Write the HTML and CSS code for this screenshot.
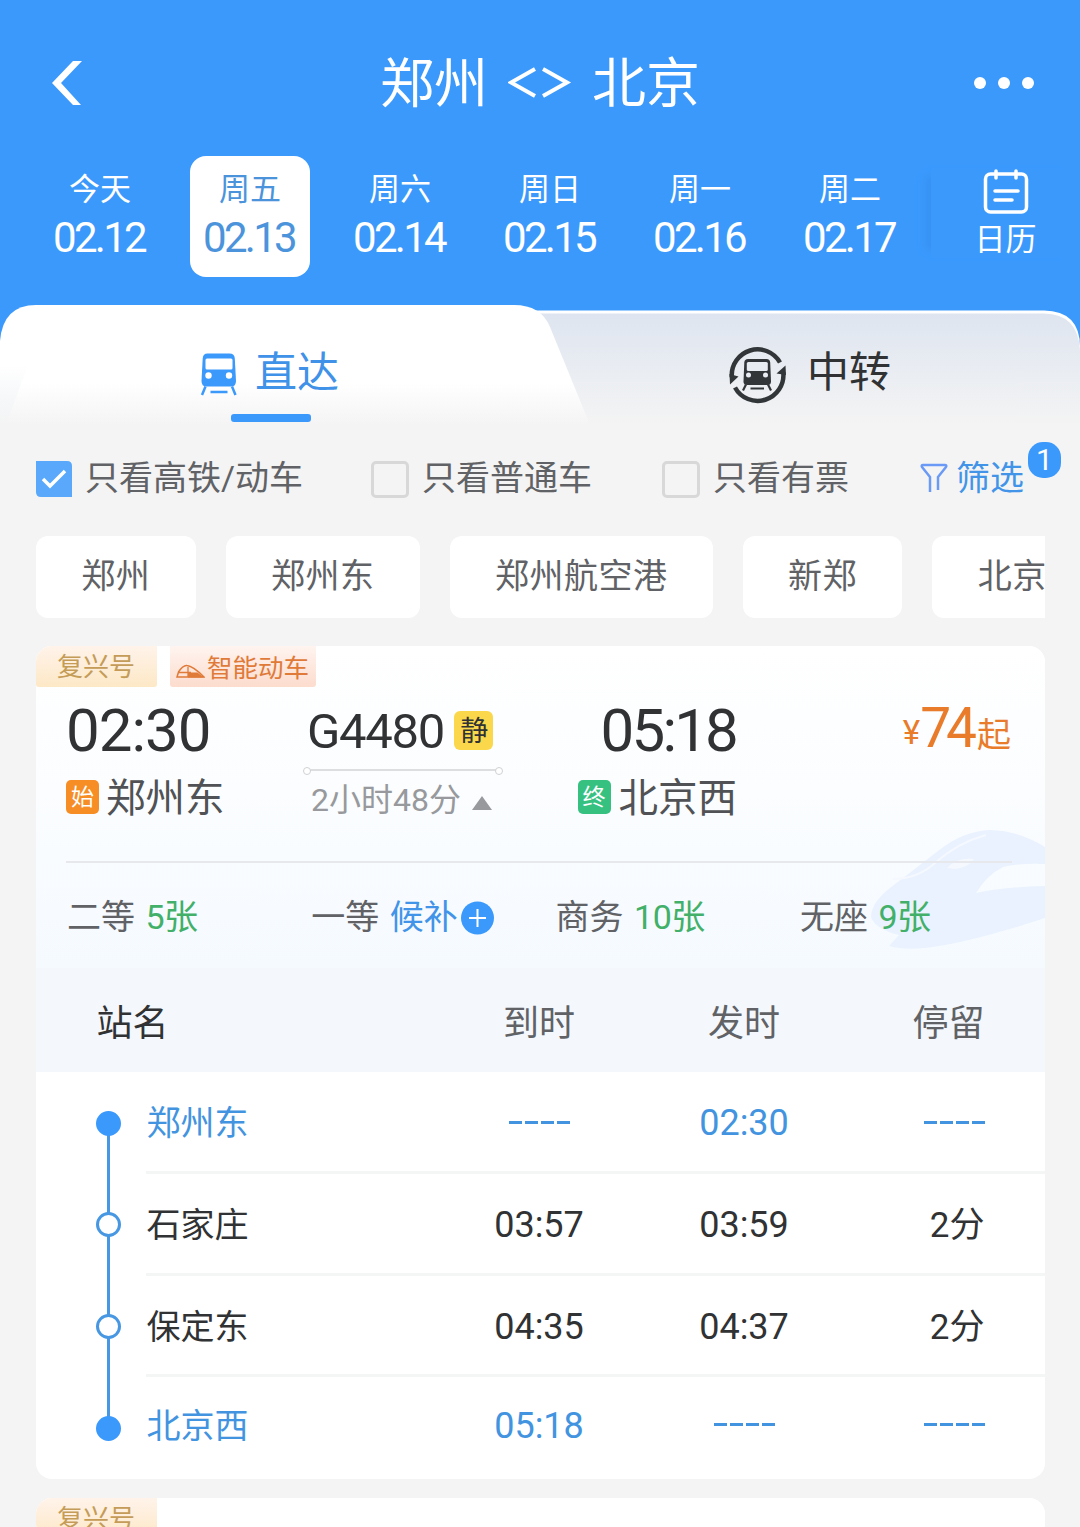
FILE: index.html
```html
<!DOCTYPE html>
<html lang="zh-CN">
<head>
  <meta charset="UTF-8">
  <meta name="viewport" content="width=device-width, initial-scale=1.0">
  <title>郑州 - 北京</title>
  <link rel="stylesheet" href="styles.css">
</head>
<body>
  <header class="header">
    <div class="nav">
      <svg class="back" width="32" height="46" viewBox="0 0 32 46"><path d="M22 1h9L10 23l20 22h-8L1 23z" fill="#fff"/></svg>
      <h1 class="title">郑州 <svg width="64" height="36" viewBox="0 0 64 36"><path d="M27 4L3 17.500 27 31M35 4l24 13.500L35 31" fill="none" stroke="#fff" stroke-width="4"/></svg> 北京</h1>
      <div class="more"><i></i><i></i><i></i></div>
    </div>
    <div class="dates">
      <div class="date"><span class="week">今天</span><span class="day">02.12</span></div>
      <div class="date active"><span class="week">周五</span><span class="day">02.13</span></div>
      <div class="date"><span class="week">周六</span><span class="day">02.14</span></div>
      <div class="date"><span class="week">周日</span><span class="day">02.15</span></div>
      <div class="date"><span class="week">周一</span><span class="day">02.16</span></div>
      <div class="date"><span class="week">周二</span><span class="day">02.17</span></div>
      <div class="calendar">
        <svg width="46" height="46" viewBox="0 0 46 46" fill="none" stroke="#fff" stroke-width="3.500" stroke-linecap="round"><rect x="2.500" y="5" width="41" height="38" rx="5"/><path d="M13 2v7M33 2v7M12 22h23M12 31h17"/></svg>
        <span>日历</span>
      </div>
    </div>
  </header>

  <nav class="tabs">
    <svg class="tabs-bg" width="1080" height="120" viewBox="0 0 1080 120">
      <defs>
        <linearGradient id="gray" x1="0" y1="0" x2="0" y2="1"><stop offset="0" stop-color="#dee5f0"/><stop offset="1" stop-color="#f4f4f4"/></linearGradient>
        <linearGradient id="white" x1="0" y1="0" x2="0" y2="1"><stop offset="0.65" stop-color="#fff"/><stop offset="1" stop-color="#f4f4f4"/></linearGradient>
        <linearGradient id="edge" x1="0" y1="0" x2="0" y2="1"><stop offset="0" stop-color="#fff"/><stop offset="0.6" stop-color="#f5f7f9"/><stop offset="1" stop-color="#f4f4f4"/></linearGradient>
      </defs>
      <path d="M500 5.500H1044Q1080 6 1080 42V120H500z" fill="#fff"/>
      <path d="M500 8.500H1044Q1078 9 1080 45V120H500z" fill="url(#gray)"/>
      <path d="M0 120V36Q3 0 36 0H514Q541 0 550 22L590 120z" fill="url(#white)"/>
      <path d="M0 60H28L6 120H0z" fill="url(#edge)"/>
    </svg>
    <div class="tab tab-direct">
      <svg width="38" height="44" viewBox="0 0 38 44">
        <path d="M7.500 1.500h22q5 0 5.300 5l1.200 22.500q0 5.500-5 5.500H6.500q-5 0-5-5.500l1.200-22.500Q3 1.500 7.500 1.500z" fill="#3b99fc"/>
        <rect x="5.500" y="6.500" width="27" height="11" rx="1.500" fill="#fff"/>
        <circle cx="8.500" cy="23.500" r="3.200" fill="#fff"/>
        <circle cx="29" cy="23.500" r="3.200" fill="#fff"/>
        <path d="M5.500 34.500l-3.500 8.500M32 34.500l3.500 8.500M10.500 40h17" fill="none" stroke="#3b99fc" stroke-width="2.500"/>
      </svg>
      <span>直达</span>
    </div>
    <div class="tab tab-transfer">
      <svg width="58" height="60" viewBox="0 0 58 60">
        <path d="M2.800 31A25.800 25.800 0 0 1 51 16.500M54.300 26.500A25.800 25.800 0 0 1 6 41.500" fill="none" stroke="#333639" stroke-width="4.500"/>
        <path d="M.5 28L1 38.500 9.500 30.500zM57 29L56.500 19.500 47.500 27.500z" fill="#333639"/>
        <path d="M19 13h18.500q3.500 0 3.700 3.500l.8 19q0 3.500-3.500 3.500H18q-3.500 0-3.500-3.500l.8-19Q15.500 13 19 13z" fill="#333639"/>
        <rect x="17.800" y="16" width="21" height="9" rx="1.500" fill="#e7ebf2"/>
        <circle cx="19.500" cy="29" r="2.500" fill="#e9ecf2"/>
        <circle cx="36.500" cy="29" r="2.500" fill="#e9ecf2"/>
        <path d="M17 38.500l-3 6M39 38.500l3 6M21.500 42.500h13.500" fill="none" stroke="#333639" stroke-width="2.200"/>
      </svg>
      <span>中转</span>
    </div>
  </nav>

  <div class="filters">
    <div class="check high-speed">
      <svg width="36" height="36" viewBox="0 0 36 36"><path d="M0 0H31Q36 0 36 5V36H5Q0 36 0 31z" fill="#59a8fb"/><path d="M7 18l7 7 15-15" fill="none" stroke="#fff" stroke-width="3.500"/></svg>
      <span>只看高铁/动车</span>
    </div>
    <div class="check normal"><i class="box"></i><span>只看普通车</span></div>
    <div class="check available"><i class="box"></i><span>只看有票</span></div>
    <div class="filter">
      <svg width="28" height="30" viewBox="0 0 28 30" fill="none" stroke="#6a9af5" stroke-width="2.500" stroke-linejoin="round"><path d="M10 29V14L2 4Q1 2 3 2H25Q27 2 26 4L18 14V27"/></svg>
      <span>筛选</span>
      <b class="badge">1</b>
    </div>
  </div>

  <div class="stations">
    <span class="chip">郑州</span>
    <span class="chip">郑州东</span>
    <span class="chip">郑州航空港</span>
    <span class="chip">新郑</span>
    <span class="chip">北京</span>
  </div>

  <section class="card">
    <div class="summary">
      <svg class="watermark" width="180" height="126" viewBox="0 0 180 126">
        <path d="M180 22Q155 6 125 5Q98 6 73 26Q46 47 25 63Q6 78 6 92Q10 104 34 110L24 121Q42 126 68 122Q110 116 180 93V61Q140 62 111 68Q122 50 138 42Q154 38 180 39z" fill="#e9f2fe"/>
        <path d="M28 54Q52 54 70 38Q92 18 121 10" fill="none" stroke="#f5f9ff" stroke-width="2"/>
        <path d="M82 43Q92 32 109 34Q104 42 90 44z" fill="#f5f9ff"/>
      </svg>
      <div class="tags">
        <span class="tag fuxing">复兴号</span>
        <span class="tag smart">
          <svg width="29" height="16" viewBox="0 0 29 16"><path d="M1 13L2.500 8Q7 1 11 1.500Q17 2 28 13z" fill="none" stroke="#e07a38" stroke-width="1.500"/><path d="M2 8.500h13M12 3v10" stroke="#e07a38" stroke-width="1.300"/><path d="M12 8.500h9.500l6.500 5H12z" fill="#e07a38"/></svg>
          智能动车
        </span>
      </div>
      <div class="trip">
        <div class="stop">
          <div class="time">02:30</div>
          <div class="place"><em class="mark start">始</em>郑州东</div>
        </div>
        <div class="train">
          <div class="number">G4480<em class="quiet">静</em></div>
          <div class="line"></div>
          <div class="duration">2小时48分<i class="arrow"></i></div>
        </div>
        <div class="stop arrive">
          <div class="time">05:18</div>
          <div class="place"><em class="mark end">终</em>北京西</div>
        </div>
        <div class="price"><small>¥</small><strong>74</strong>起</div>
      </div>
      <div class="seats">
        <div class="seat">二等 <span class="left">5张</span></div>
        <div class="seat">一等 <span class="wait">候补</span><svg width="33" height="34" viewBox="0 0 33 34"><circle cx="16.500" cy="17" r="16.500" fill="#3b99fc"/><path d="M8 17h17M16.500 8v18" stroke="#fff" stroke-width="2"/></svg></div>
        <div class="seat">商务 <span class="left">10张</span></div>
        <div class="seat">无座 <span class="left">9张</span></div>
      </div>
    </div>
    <div class="row head">
      <span class="name">站名</span><span>到时</span><span>发时</span><span class="stay">停留</span>
    </div>
    <div class="timetable">
      <div class="row terminal">
        <i class="dot"></i><span class="name">郑州东</span><span class="none"><u></u><u></u><u></u><u></u></span><span>02:30</span><span class="stay none"><u></u><u></u><u></u><u></u></span>
      </div>
      <div class="row">
        <i class="dot"></i><span class="name">石家庄</span><span>03:57</span><span>03:59</span><span class="stay">2分</span>
      </div>
      <div class="row">
        <i class="dot"></i><span class="name">保定东</span><span>04:35</span><span>04:37</span><span class="stay">2分</span>
      </div>
      <div class="row terminal">
        <i class="dot"></i><span class="name">北京西</span><span>05:18</span><span class="none"><u></u><u></u><u></u><u></u></span><span class="stay none"><u></u><u></u><u></u><u></u></span>
      </div>
    </div>
  </section>

  <section class="card">
    <div class="summary">
      <div class="tags"><span class="tag fuxing">复兴号</span></div>
    </div>
  </section>
</body>
</html>
```
FILE: styles.css
```css
* {
  box-sizing: border-box;
  margin: 0;
  padding: 0;
}

body {
  width: 1080px;
  height: 1527px;
  overflow: hidden;
  background: #f4f4f4;
  color: #303234;
  font-family: Roboto, "Noto Sans CJK SC", sans-serif;
  font-size: 34px;
}

em, i, u {
  font-style: normal;
  text-decoration: none;
}

svg {
  display: block;
  flex: none;
}

.header {
  height: 345px;
  background: #3b99fc;
  color: #fff;
}

.nav {
  display: flex;
  justify-content: space-between;
  align-items: center;
  height: 156px;
  padding: 10px 46px 0 51px;
}

.title {
  display: flex;
  align-items: center;
  gap: 20px;
  margin-left: 23px;
  padding-top: 4px;
  font-size: 54px;
  font-weight: 400;
  line-height: 64px;
}

.title svg {
  margin-top: -4px;
}

.more {
  display: flex;
  gap: 12px;
}

.more i {
  width: 12px;
  height: 12px;
  border-radius: 50%;
  background: #fff;
}

.dates {
  display: flex;
  padding-left: 25px;
}

.date {
  display: flex;
  flex-direction: column;
  align-items: center;
  width: 120px;
  height: 121px;
  margin: 0 15px;
  padding-top: 13px;
  border-radius: 16px;
}

.date.active {
  background: #fff;
  color: #4b94dc;
}

.week {
  font-size: 31px;
  line-height: 42px;
}

.day {
  margin-left: -2px;
  font-size: 42px;
  line-height: 53px;
  letter-spacing: -2.700px;
}

.calendar {
  display: flex;
  flex-direction: column;
  align-items: center;
  gap: 4px;
  width: 149px;
  height: 88px;
  margin-top: 13px;
  margin-left: 6px;
  box-shadow: -12px 0 8px -8px #3691f2;
  font-size: 31px;
  line-height: 42px;
}

.tabs {
  position: relative;
  display: flex;
  height: 120px;
  margin-top: -40px;
  font-size: 42px;
  line-height: 54px;
}

.tabs-bg {
  position: absolute;
  left: 0;
  top: 0;
}

.tab {
  position: relative;
  display: flex;
  width: 540px;
  padding-top: 41px;
}

.tab-direct {
  gap: 17px;
  padding-left: 200px;
  color: #3f92e8;
}

.tab-direct svg {
  margin-top: 6px;
}

.tab-direct::after {
  content: "";
  position: absolute;
  left: 231px;
  top: 109px;
  width: 80px;
  height: 8px;
  border-radius: 3px;
  background: #3b99fc;
}

.tab-transfer {
  gap: 20px;
  padding-left: 189px;
}

.filters {
  display: flex;
  height: 111px;
  padding: 27px 0 0 36px;
  color: #606266;
  line-height: 53px;
}

.check {
  display: flex;
}

.check svg {
  margin: 9px 13px 0 0;
}

.high-speed {
  width: 335px;
}

.normal {
  width: 291px;
}

.available {
  width: 258px;
}

.box {
  width: 38px;
  height: 37px;
  margin: 9px 13px 0 0;
  border: 3px solid #d8d8d8;
  border-radius: 5px;
}

.filter {
  position: relative;
  display: flex;
  gap: 8px;
  color: #4294e8;
}

.filter svg {
  margin-top: 11px;
}

.badge {
  position: absolute;
  left: 108px;
  top: -10px;
  width: 33px;
  height: 36px;
  border-radius: 15px;
  background: #3b99fc;
  color: #fff;
  font-size: 30px;
  font-weight: 400;
  line-height: 36px;
  text-align: center;
}

.stations {
  display: flex;
  gap: 30px;
  width: 1009px;
  margin-left: 36px;
  overflow: hidden;
}

.chip {
  flex: none;
  height: 82px;
  padding: 0 45.300px;
  border-radius: 12px;
  background: #fff;
  color: #606266;
  line-height: 81px;
  letter-spacing: 0.5px;
}

.card {
  width: 1009px;
  margin: 28px 0 0 36px;
  border-radius: 16px;
  background: #fff;
  overflow: hidden;
}

.card + .card {
  margin-top: 19px;
}

.summary {
  position: relative;
  height: 322px;
  background: linear-gradient(#fff, #fbfdff 45%, #f5faff);
}

.card + .card .summary {
  height: 41px;
  background: #fff;
}

.watermark {
  position: absolute;
  right: 0;
  top: 179px;
}

.tags {
  display: flex;
  gap: 13px;
  height: 41px;
}

.tag {
  display: flex;
  border-radius: 0 0 3px 3px;
  font-size: 26px;
  line-height: 43px;
}

.fuxing {
  width: 121px;
  padding-left: 21px;
  background: linear-gradient(#fff3ea, #fde8c6);
  color: #c49c58;
}

.smart {
  width: 146px;
  padding-left: 6px;
  gap: 2px;
  background: linear-gradient(#fff4f0, #fcdccd);
  color: #e07a38;
  font-size: 25.500px;
  line-height: 44px;
}

.smart svg {
  margin-top: 18px;
}

.trip {
  position: relative;
  display: grid;
  grid-template-columns: 239px 197px 235px 1fr;
  height: 176px;
  margin: 0 33px 0 30px;
  border-bottom: 2px solid #e6e8ec;
}

.time {
  height: 80px;
  font-size: 60px;
  line-height: 87px;
  letter-spacing: -1px;
}

.place {
  display: flex;
  align-items: center;
  color: #505255;
  font-size: 39.500px;
  line-height: 63px;
}

.arrive .time {
  padding-right: 1px;
  text-align: right;
  letter-spacing: -2.800px;
}

.arrive .place {
  justify-content: flex-end;
}

.mark {
  width: 33px;
  height: 34px;
  margin: -3px 7px 0 0;
  border-radius: 5px;
  color: #fff;
  font-size: 23px;
  line-height: 35px;
  text-align: center;
}

.start {
  background: #f78d25;
}

.end {
  margin-right: 8px;
  background: #36c181;
}

.number {
  display: flex;
  align-items: center;
  height: 82px;
  padding: 7px 0 0 2px;
  font-size: 49px;
  letter-spacing: -1.300px;
}

.quiet {
  width: 39px;
  height: 39px;
  margin: -2px 0 0 10px;
  border-radius: 6px;
  background: #fbd84b;
  font-size: 28px;
  line-height: 42px;
  text-align: center;
}

.line {
  position: relative;
  height: 2px;
  background: #dcdee0;
}

.line::before,
.line::after {
  content: "";
  position: absolute;
  top: -2px;
  width: 6px;
  height: 6px;
  border: 1px solid #cfd1d4;
  border-radius: 50%;
  background: #fff;
}

.line::before {
  left: -2px;
}

.line::after {
  right: -1px;
}

.duration {
  display: flex;
  align-items: center;
  padding-left: 6px;
  color: #97999c;
  font-size: 32px;
  line-height: 59px;
  white-space: nowrap;
}

.arrow {
  margin: 4px 0 0 11px;
  border: 10px solid transparent;
  border-top: 0;
  border-bottom: 14px solid #97999c;
}

.price {
  padding: 11px 1px 0 0;
  color: #e97c2a;
  text-align: right;
  line-height: 60px;
}

.price small {
  font-size: 33px;
  vertical-align: 3px;
}

.price strong {
  margin-right: 5px;
  font-size: 55px;
  font-weight: 400;
  letter-spacing: -5px;
}

.seats {
  position: relative;
  display: grid;
  grid-template-columns: repeat(4, 244.300px);
  padding: 29px 0 0 31px;
}

.seat {
  display: flex;
  gap: 10.500px;
  color: #606266;
  line-height: 51px;
  white-space: nowrap;
}

.seat svg {
  margin: 9px 0 0 -7px;
}

.left {
  color: #42b069;
  letter-spacing: -0.500px;
}

.wait {
  color: #4294e8;
}

.row {
  position: relative;
  display: grid;
  grid-template-columns: 290px 205px 205px 138px;
  height: 101.750px;
  padding-left: 110.500px;
  line-height: 103px;
  text-align: center;
  font-size: 36px;
}

.row .name {
  text-align: left;
  font-size: 34px;
}

.row .stay {
  text-align: right;
  font-size: 35px;
}

.head {
  height: 104px;
  background: #f4f8fd;
  color: #606266;
  line-height: 112px;
}

.head .name,
.head .stay {
  font-size: 36px;
}

.head .name {
  margin-left: -50px;
  color: #303234;
}

.timetable .row::after {
  content: "";
  position: absolute;
  left: 110px;
  right: 0;
  bottom: 0;
  height: 3px;
  background: #f4f5f5;
}

.timetable .row:last-child::after {
  display: none;
}

.timetable .row::before {
  content: "";
  position: absolute;
  left: 71px;
  top: 51px;
  width: 3px;
  height: 102px;
  background: #4797e2;
}

.timetable .row:last-child::before {
  display: none;
}

.timetable .row:last-child {
  line-height: 99px;
}

.timetable .terminal {
  color: #4294e0;
}

.dot {
  position: absolute;
  z-index: 1;
  left: 60px;
  top: 38.500px;
  width: 25px;
  height: 25px;
  border: 3px solid #4797e2;
  border-radius: 50%;
  background: #fff;
}

.terminal .dot {
  border-color: #3b99fc;
  background: #3b99fc;
}

.row .none {
  display: flex;
  align-items: center;
  justify-content: center;
  gap: 3px;
  padding-bottom: 3px;
}

.row .none.stay {
  justify-content: flex-end;
}

.row:last-child .none {
  padding-bottom: 7px;
}

.none u {
  width: 13px;
  height: 3px;
  background: #4294e0;
}
```
